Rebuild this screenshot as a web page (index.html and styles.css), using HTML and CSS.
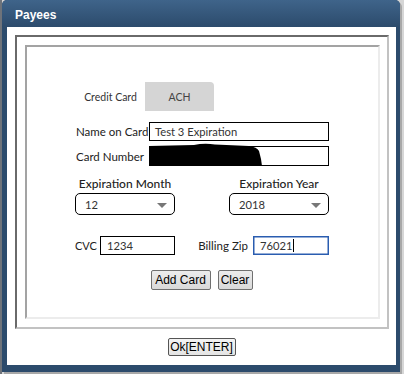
FILE: index.html
```html
<!DOCTYPE html>
<html>
<head>
<meta charset="utf-8">
<link rel="stylesheet" href="styles.css">
</head>
<body>
<div class="dialog">
  <div class="titlebar">Payees</div>
  <div class="content">
    <div class="outer-box">
      <div class="inner-box">
        <div class="form">
          <div class="tabs">
            <div class="tab active">Credit Card</div>
            <div class="tab ach">ACH</div>
          </div>
          <div class="fields">
            <div class="label">Name on Card</div>
            <div class="field">Test 3 Expiration</div>
            <div class="label">Card Number</div>
            <div class="field masked">
              <svg class="blob" width="116" height="24" viewBox="0 0 116 24"><path d="M0 3 L45 2 Q55 0 66 1.5 L100 3 Q108 4 110 8 L112 16 L113 23 L0 23 Z" fill="#000"/></svg>
            </div>
          </div>
          <div class="exp-row">
            <div class="exp-col">
              <div class="exp-label">Expiration Month</div>
              <div class="select"><span>12</span><span class="arrow"></span></div>
            </div>
            <div class="exp-col">
              <div class="exp-label">Expiration Year</div>
              <div class="select"><span>2018</span><span class="arrow"></span></div>
            </div>
          </div>
          <div class="cvc-row">
            <div class="group">
              <div class="label cvc-label">CVC</div>
              <div class="field small">1234</div>
            </div>
            <div class="group zip">
              <div class="label">Billing Zip</div>
              <div class="field small focus">76021<span class="caret"></span></div>
            </div>
          </div>
          <div class="buttons">
            <button class="btn add">Add Card</button>
            <button class="btn clear">Clear</button>
          </div>
        </div>
      </div>
    </div>
    <div class="ok-row"><button class="btn ok">Ok[ENTER]</button></div>
  </div>
</div>
</body>
</html>
```

FILE: styles.css
```css
html, body {
  margin: 0;
  padding: 0;
}
body {
  width: 404px;
  height: 374px;
  background: #d6d6d6;
  overflow: hidden;
  position: relative;
  font-family: Lato, "Liberation Sans", sans-serif;
}
body::before {
  content: "";
  position: absolute;
  left: 0;
  top: 0;
  width: 2px;
  height: 374px;
  background: #6e737a;
}
.dialog {
  margin-left: 2px;
  width: 398px;
  height: 372px;
  box-sizing: border-box;
  background: #2c4b6c;
  border-radius: 5px 5px 0 0;
  padding: 0 4px 6px 5px;
  box-shadow: 2px 2px 0 #a8a8a8;
}
.titlebar {
  height: 27px;
  margin: 0 -4px 0 -5px;
  padding-left: 13px;
  box-sizing: border-box;
  background: linear-gradient(#3f648a, #2c4b6c);
  border-radius: 5px 5px 0 0;
  color: #fff;
  font-family: "Liberation Sans", Arial, sans-serif;
  font-weight: bold;
  font-size: 12px;
  line-height: 31px;
}
.content {
  background: #fff;
  height: 338px;
  box-sizing: border-box;
  padding: 8px 8px 0 8px;
}
.outer-box {
  width: 374px;
  height: 294px;
  box-sizing: border-box;
  border: 2px solid;
  border-color: #6a6a6a #c2c2c2 #c2c2c2 #6a6a6a;
  padding: 8px 7px 8px 8px;
}
.inner-box {
  width: 355px;
  height: 274px;
  box-sizing: border-box;
  border: 2px solid;
  border-color: #a3a3a3 #ececec #ececec #a3a3a3;
  padding-top: 35px;
}
.form {
  width: 254px;
  margin-left: 48px;
  color: #222;
}
.tabs {
  display: flex;
  margin-left: 1px;
  height: 29px;
}
.tab {
  width: 69px;
  height: 29px;
  display: flex;
  align-items: center;
  justify-content: center;
  font-size: 10.5px;
  color: #333;
}
.ach {
  background: #d5d5d5;
  border-radius: 0 4px 0 0;
  color: #444;
}
.fields {
  margin-top: 11px;
  display: grid;
  grid-template-columns: 74px 180px;
  row-gap: 5px;
  align-items: center;
}
.label {
  font-size: 11.5px;
  color: #222;
  white-space: nowrap;
  padding-left: 1px;
}
.cvc-label {
  width: 19px;
  padding-left: 0;
  font-size: 11px;
}
.field {
  height: 19px;
  box-sizing: border-box;
  border: 1px solid #000;
  font-size: 11.2px;
  line-height: 17px;
  padding-left: 5px;
  color: #333;
  position: relative;
  white-space: nowrap;
}
.masked {
  height: 20px;
}
.blob {
  position: absolute;
  left: -1px;
  top: -4px;
}
.exp-row {
  display: flex;
  justify-content: space-between;
  margin-top: 9px;
}
.exp-col {
  width: 100px;
  display: flex;
  flex-direction: column;
  align-items: center;
}
.exp-label {
  font-size: 12px;
  line-height: 18px;
  font-weight: 500;
  white-space: nowrap;
  color: #222;
}
.select {
  margin-top: 0;
  width: 100px;
  height: 22px;
  box-sizing: border-box;
  border: 1px solid #000;
  border-radius: 5px;
  display: flex;
  align-items: center;
  justify-content: space-between;
  padding: 0 7px 0 9px;
  font-size: 11.2px;
  color: #333;
}
.arrow {
  width: 0;
  height: 0;
  border-left: 5px solid transparent;
  border-right: 5px solid transparent;
  border-top: 5px solid #777;
  margin-top: 2px;
}
.cvc-row {
  display: flex;
  justify-content: space-between;
  margin-top: 21px;
}
.group {
  display: flex;
  align-items: center;
  gap: 6px;
}
.zip {
  gap: 5px;
}
.small {
  width: 75px;
  padding-left: 6px;
}
.zip .small {
  width: 76px;
}
.focus {
  border-color: #2a5db0;
  box-shadow: inset 0 0 0 0.5px #2a5db0;
}
.caret {
  display: inline-block;
  width: 1px;
  height: 13px;
  background: #000;
  vertical-align: -2px;
  margin-left: 1px;
}
.buttons {
  display: flex;
  justify-content: center;
  gap: 7px;
  margin-top: 15px;
  margin-left: -1px;
}
.btn {
  font-family: "Liberation Sans", Arial, sans-serif;
  font-size: 12px;
  color: #000;
  background: linear-gradient(#ececec, #d9d9d9);
  border: 1px solid #707070;
  border-radius: 2px;
  padding: 0;
  height: 20px;
  margin: 0;
}
.add {
  width: 60px;
}
.clear {
  width: 35px;
}
.ok-row {
  display: flex;
  justify-content: center;
  margin-top: 9px;
}
.ok {
  width: 68px;
  height: 18px;
  background: linear-gradient(#f4f4f4, #e4e4e4);
  border-color: #555;
  line-height: 16px;
}
```
